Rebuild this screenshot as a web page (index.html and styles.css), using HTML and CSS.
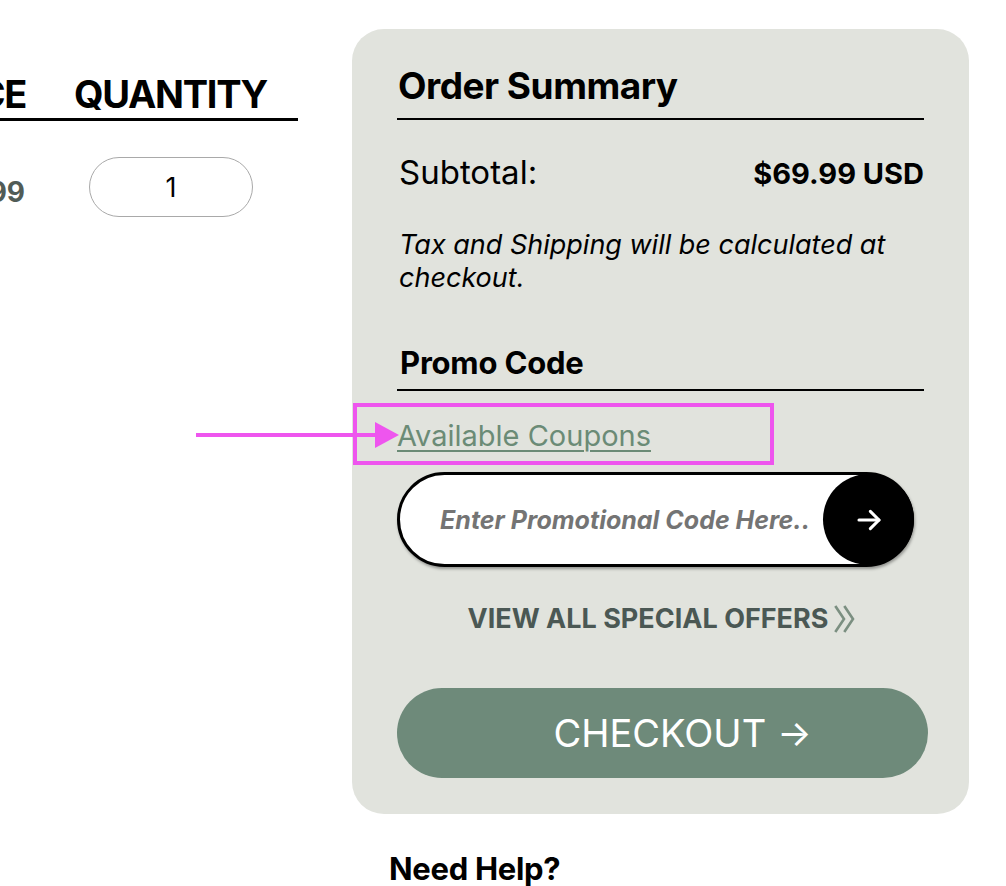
FILE: index.html
```html
<!DOCTYPE html>
<html lang="en">
<head>
<meta charset="utf-8">
<title>Cart</title>
<link rel="stylesheet" href="styles.css">
</head>
<body>
<div class="page">
  <section class="cart-col">
    <div class="cart-table">
      <div class="th th-price">PRICE</div>
      <div class="th th-qty">QUANTITY</div>
      <div class="td td-price">$69.99</div>
      <div class="td td-qty"><div class="qty-box">1</div></div>
    </div>
  </section>

  <aside class="side">
    <div class="summary">
      <h2 class="sum-title">Order Summary</h2>
      <div class="sum-row">
        <span class="sum-label">Subtotal:</span>
        <span class="sum-value">$69.99 USD</span>
      </div>
      <p class="sum-note">Tax and Shipping will be calculated at checkout.</p>

      <h3 class="promo-title">Promo Code</h3>
      <div class="coupon-line">
        <a class="coupon-link" href="#">Available Coupons</a>
        <span class="annot-box"></span>
        <span class="annot-arrow"><span class="annot-head"></span></span>
      </div>

      <div class="promo-field">
        <span class="promo-placeholder">Enter Promotional Code Here..</span>
        <span class="promo-go">
          <svg width="32" height="32" viewBox="0 0 24 24" fill="none" stroke="#fff" stroke-width="2.3" stroke-linecap="round" stroke-linejoin="round"><path d="M4.5 12h15"/><path d="M13 5.5l6.5 6.5-6.5 6.5"/></svg>
        </span>
      </div>

      <a class="offers" href="#">VIEW ALL SPECIAL OFFERS<svg class="chev" width="24" height="32" viewBox="0 0 24 32" fill="none" stroke="#7b8f81" stroke-width="2.6" stroke-linecap="square"><path d="M3 4l8 12-8 12"/><path d="M12 4l8 12-8 12"/></svg></a>

      <a class="checkout" href="#">CHECKOUT<span class="co-arrow">→</span></a>
    </div>
    <h3 class="help">Need Help?</h3>
  </aside>
</div>
</body>
</html>
```

FILE: styles.css
```css
* { box-sizing: border-box; }
html, body { margin: 0; background: #fff; }
body {
  font-family: Inter, "Noto Sans", "Liberation Sans", sans-serif;
  color: #000;
  width: 1006px;
  height: 886px;
  overflow: hidden;
}
.page {
  display: flex;
  align-items: flex-start;
  padding-top: 29px;
}

/* cart table (left, clipped) */
.cart-col {
  width: 298px;
  flex: none;
  overflow: hidden;
  margin-right: 54px;
}
.cart-table {
  display: grid;
  grid-template-columns: 145px 273px;
  margin-left: -120px;
  width: 418px;
}
.th {
  font-weight: 700;
  font-size: 38px;
  letter-spacing: -1.3px;
  line-height: 46px;
  padding-top: 42px;
  padding-bottom: 1px;
  border-bottom: 3px solid #000;
}
.th-price { text-align: right; margin-right: -1px; }
.th-qty { padding-left: 49px; }
.td { padding-top: 36px; }
.td-price {
  text-align: right;
  font-weight: 700;
  font-size: 28px;
  color: #515c57;
  padding-top: 54px;
}
.td-qty { padding-left: 64px; }
.qty-box {
  width: 164px;
  height: 60px;
  border: 1px solid #a9a9a9;
  border-radius: 30px;
  display: flex;
  align-items: center;
  justify-content: center;
  font-size: 27px;
}

/* right side */
.side {
  width: 617px;
  flex: none;
}
.summary {
  background: #e1e3dd;
  border-radius: 32px;
  padding: 33px 45px 36px 45px;
}
.sum-title {
  margin: 0;
  font-size: 37px;
  font-weight: 700;
  letter-spacing: -0.5px;
  line-height: 48px;
  padding-left: 1px;
  padding-bottom: 8px;
  border-bottom: 2px solid #000;
}
.sum-row {
  display: flex;
  justify-content: space-between;
  align-items: baseline;
  margin-top: 32px;
  font-size: 33px;
  line-height: 40px;
  padding-left: 2px;
}
.sum-value { font-weight: 700; font-size: 29px; }
.sum-note {
  margin: 34px 0 0;
  font-style: italic;
  font-size: 27px;
  line-height: 33px;
  padding-left: 2px;
  padding-right: 30px;
}
.promo-title {
  margin: 50px 0 0;
  font-size: 31px;
  font-weight: 700;
  letter-spacing: -0.2px;
  line-height: 38px;
  padding-left: 3px;
  padding-bottom: 7px;
  border-bottom: 2px solid #000;
}
.coupon-line {
  position: relative;
  padding-top: 27px;
  height: 81px;
}
.coupon-link {
  color: #6b8b76;
  font-size: 29px;
  line-height: 36px;
  text-decoration: underline;
  text-decoration-thickness: 2px;
  text-underline-offset: 4px;
}
.annot-box {
  position: absolute;
  left: -44px;
  top: 12px;
  width: 421px;
  height: 62px;
  border: 4px solid #ee55ee;
}
.annot-arrow {
  position: absolute;
  left: -201px;
  top: 42px;
  width: 180px;
  height: 4px;
  background: #ee55ee;
}
.annot-head {
  position: absolute;
  right: -23px;
  top: -11px;
  width: 0;
  height: 0;
  border-top: 13px solid transparent;
  border-bottom: 13px solid transparent;
  border-left: 24px solid #ee55ee;
}
.promo-field {
  width: 517px;
  height: 95px;
  border: 3px solid #000;
  border-radius: 48px;
  background: #fff;
  box-shadow: 1px 2px 3px rgba(0,0,0,0.35);
  display: flex;
  align-items: center;
  justify-content: space-between;
  padding-left: 40px;
}
.promo-placeholder {
  font-style: italic;
  font-weight: 700;
  font-size: 25px;
  color: #747474;
}
.promo-go {
  width: 91px;
  height: 91px;
  border-radius: 50%;
  background: #000;
  display: flex;
  align-items: center;
  justify-content: center;
  margin-right: -3px;
}
.offers {
  display: flex;
  justify-content: center;
  align-items: center;
  gap: 5px;
  margin-top: 35px;
  padding-left: 4px;
  color: #4b5854;
  font-weight: 700;
  font-size: 27px;
  text-decoration: none;
  line-height: 34px;
}
.checkout {
  display: flex;
  align-items: center;
  justify-content: center;
  width: 531px;
  height: 90px;
  margin-top: 52px;
  border-radius: 45px;
  background: #6e8a7a;
  color: #fff;
  font-size: 38px;
  text-decoration: none;
  padding-left: 40px;
}
.co-arrow { font-size: 36px; margin-left: 11px; }
.help {
  margin: 36px 0 0 37px;
  font-size: 31px;
  font-weight: 700;
  letter-spacing: -0.3px;
}
```
